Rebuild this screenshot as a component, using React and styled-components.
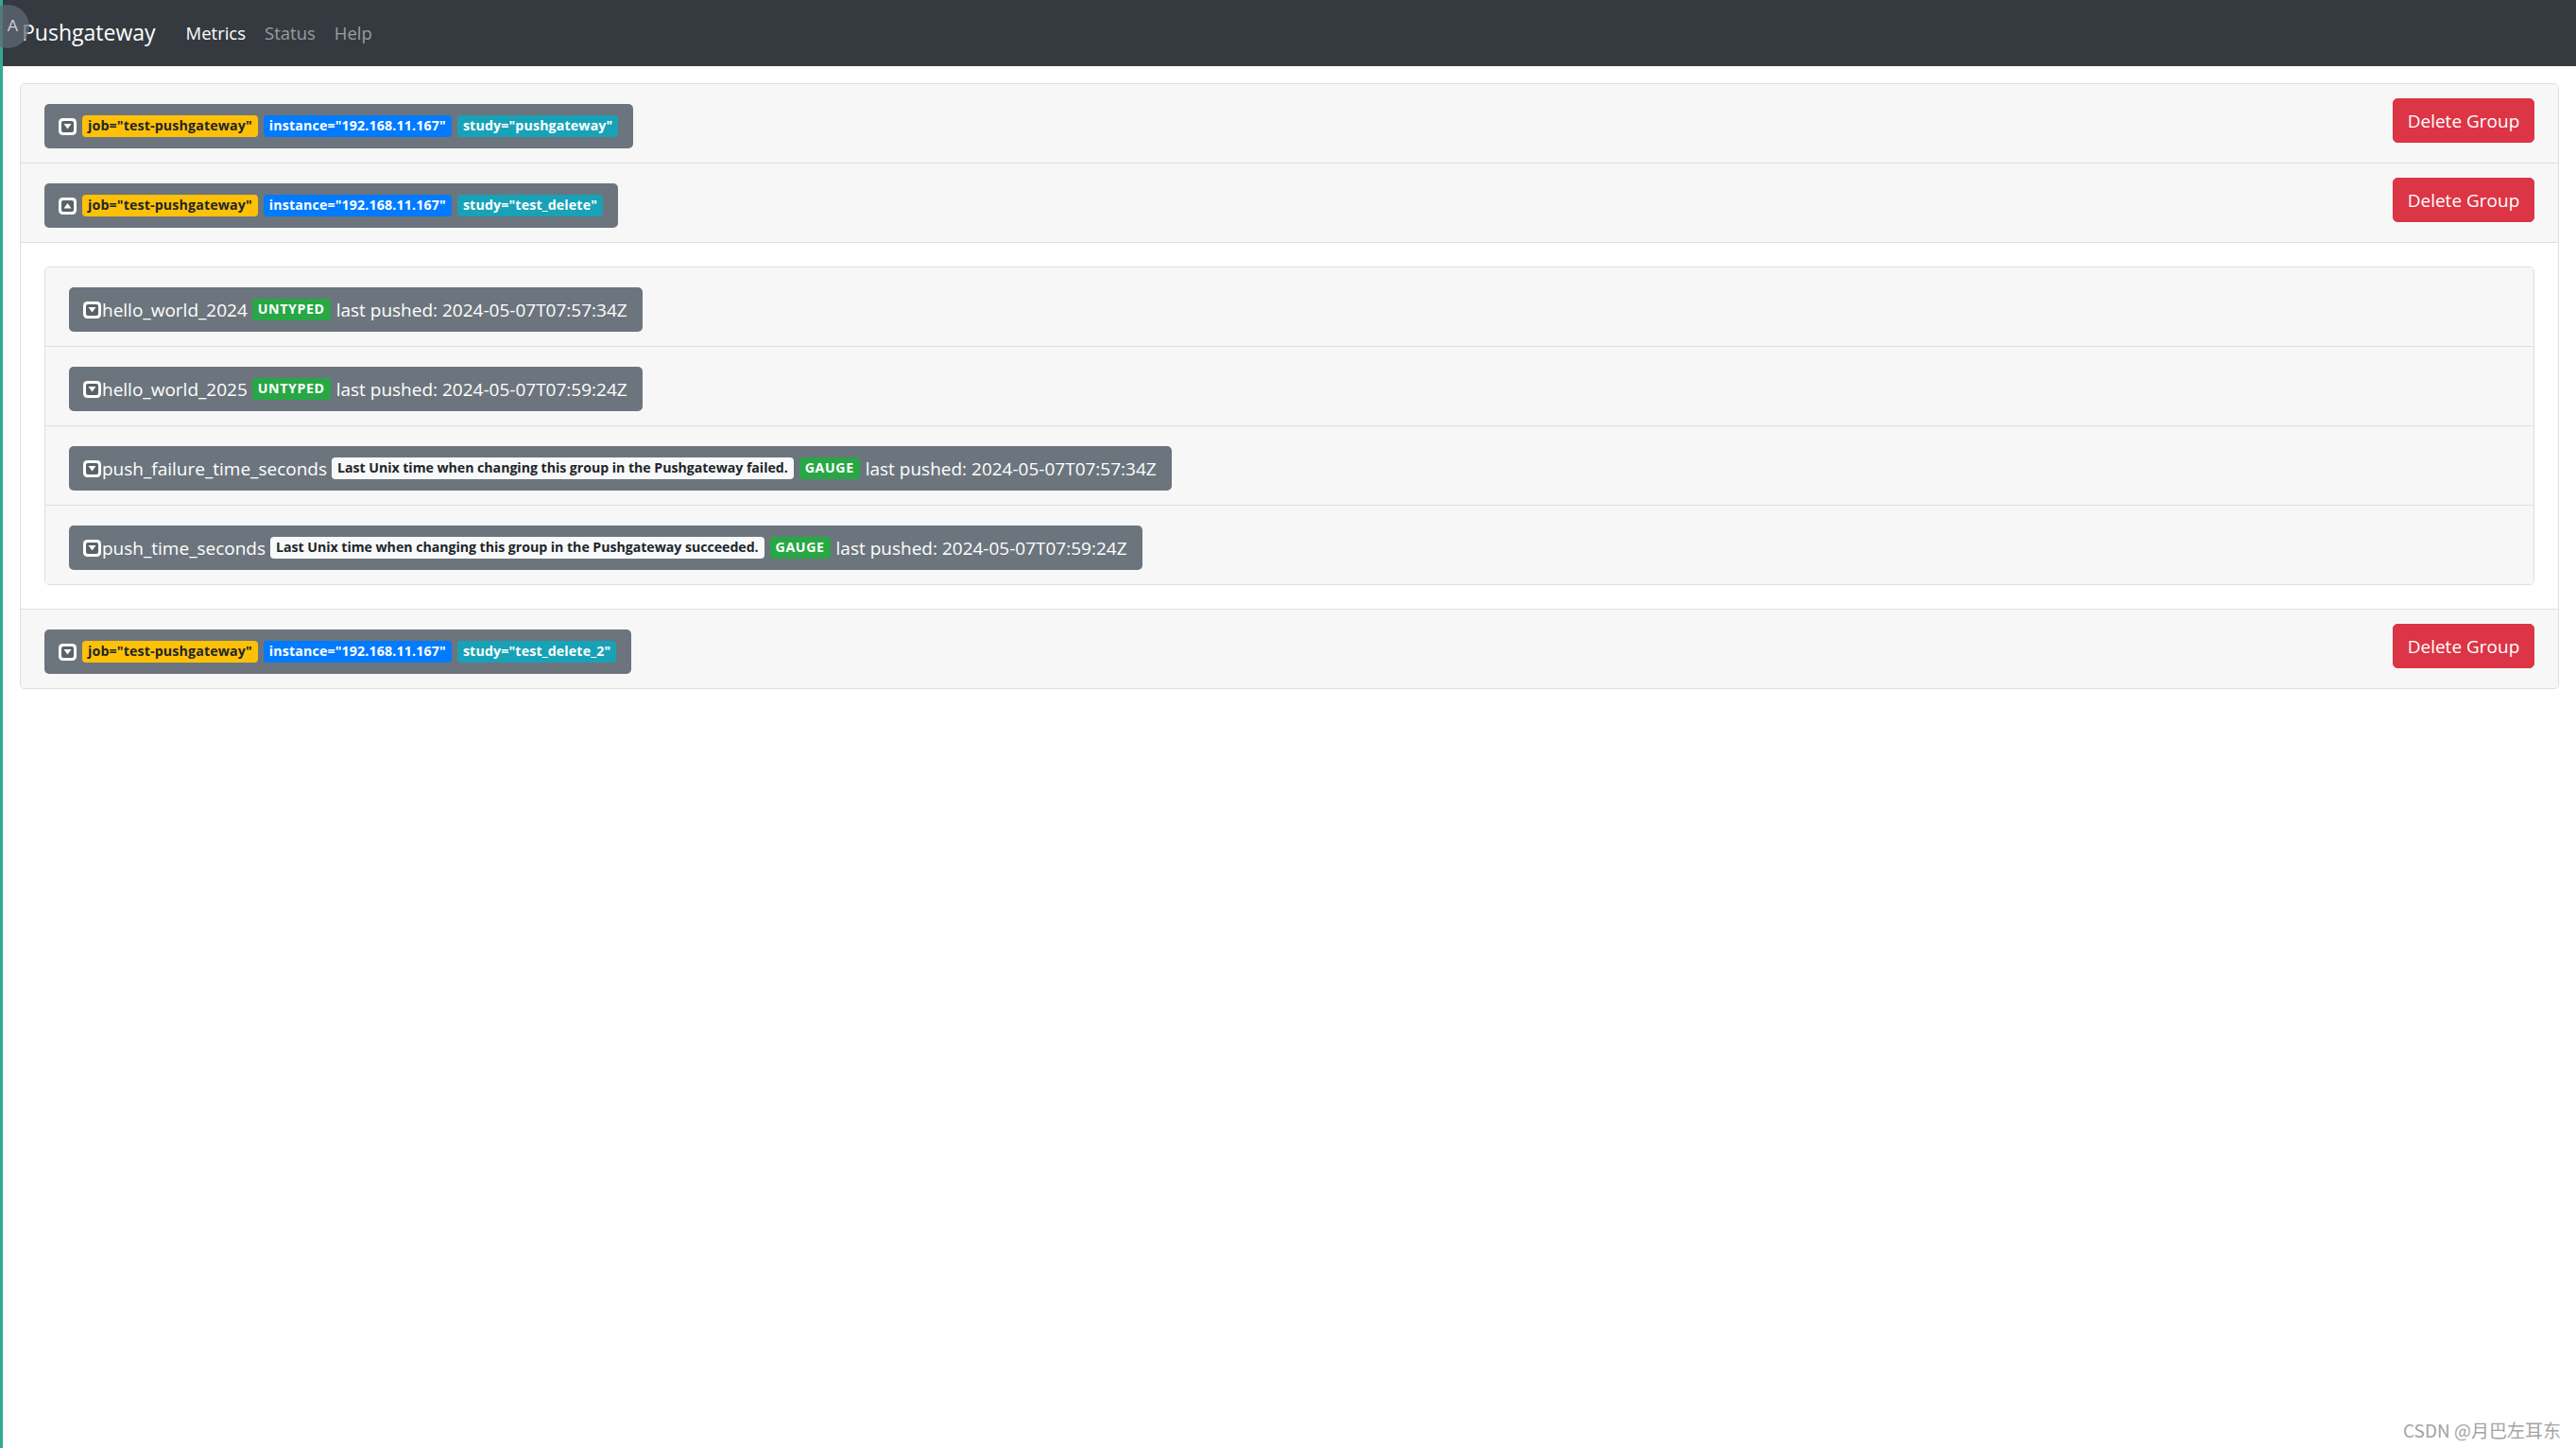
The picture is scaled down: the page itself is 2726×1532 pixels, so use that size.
import React from "react";
import styled, { createGlobalStyle } from "styled-components";

const GlobalStyle = createGlobalStyle`
  html, body { margin: 0; padding: 0; background: #ffffff; }
  body { font-family: "Open Sans", "Noto Sans", sans-serif; color: #212529; }
`;

const Page = styled.div`
  min-height: 1532px;
  border-left: 3px solid #35a894;
  box-sizing: border-box;
  position: relative;
`;

const Navbar = styled.nav`
  height: 70px;
  background: #343a40;
  display: flex;
  align-items: center;
  padding: 0 20px;
  box-sizing: border-box;
`;

const Brand = styled.a`
  font-size: 23px;
  color: #ffffff;
  margin-right: 22px;
  line-height: 1;
  padding-bottom: 2px;
`;

const NavLink = styled.a`
  font-size: 18.5px;
  padding: 0 10px;
  line-height: 1;
  color: ${(p) => (p.$active ? "#ffffff" : "rgba(255,255,255,0.5)")};
`;

const Container = styled.main`
  padding: 18px 18px 0 18px;
`;

const Card = styled.div`
  border: 1px solid #dfdfdf;
  border-radius: 5px;
  overflow: hidden;
  background: #ffffff;
`;

const Header = styled.div`
  display: flex;
  justify-content: space-between;
  align-items: flex-start;
  padding: 15px 25px;
  background: #f7f7f7;
  border-bottom: 1px solid #dfdfdf;
  &:last-child { border-bottom: 0; }
`;

const Body = styled.div`
  padding: 25px;
  border-bottom: 1px solid #dfdfdf;
  &:last-child { border-bottom: 0; }
`;

const InnerCard = styled.div`
  border: 1px solid #dfdfdf;
  border-radius: 5px;
  overflow: hidden;
`;

const MetricRow = styled.div`
  display: flex;
  padding: 21px 25px 15px 25px;
  background: #f7f7f7;
  border-bottom: 1px solid #dfdfdf;
  &:last-child { border-bottom: 0; }
`;

const Pill = styled.div`
  display: inline-flex;
  align-items: center;
  height: 47px;
  box-sizing: border-box;
  padding: 0 16px 0 15px;
  background: #6c757d;
  border-radius: 5px;
  color: #ffffff;
  font-size: 19px;
  white-space: nowrap;
  margin-top: ${(p) => p.$offset || 0}px;
  gap: ${(p) => p.$gap || 0}px;
`;

const Gap = styled.span`
  display: inline-block;
  width: ${(p) => p.$w}px;
`;

const Badge = styled.span`
  display: inline-flex;
  align-items: center;
  height: 23px;
  box-sizing: border-box;
  padding: 0 6px;
  border-radius: 4px;
  font-size: 14.2px;
  font-weight: 700;
  line-height: 1;
  letter-spacing: ${(p) => p.$ls || 0}px;
  background: ${(p) => p.$bg};
  color: ${(p) => p.$fg};
`;

const DangerButton = styled.button`
  width: 150px;
  height: 47px;
  border: 1px solid #dc3545;
  border-radius: 5px;
  background: #dc3545;
  color: #ffffff;
  font-family: "Open Sans", "Noto Sans", sans-serif;
  font-size: 19px;
  padding: 0;
  cursor: pointer;
`;

const Watermark = styled.div`
  position: absolute;
  right: 16px;
  bottom: 6px;
  font-family: "Noto Sans CJK SC", sans-serif;
  font-size: 19px;
  color: #a3a3a3;
`;

const Translate = styled.div`
  position: absolute;
  left: -18px;
  top: 5px;
  width: 46px;
  height: 46px;
  border-radius: 50%;
  background: rgba(95, 104, 116, 0.75);
  color: #c9ced4;
  font-family: "Liberation Sans", sans-serif;
  font-size: 17px;
  display: flex;
  align-items: center;
  justify-content: flex-end;
  padding-right: 12px;
  box-sizing: border-box;
`;

const VARIANTS = {
  warning: { bg: "#ffc107", fg: "#212529", ls: 0.15 },
  primary: { bg: "#007bff", fg: "#ffffff", ls: 0.15 },
  info: { bg: "#17a2b8", fg: "#ffffff", ls: 0.15 },
  success: { bg: "#28a745", fg: "#ffffff", ls: 0.6 },
  light: { bg: "#f8f9fa", fg: "#212529", ls: -0.05 },
};

function Toggle({ up }) {
  return (
    <svg width="19" height="18" viewBox="0 0 19 18" style={{ flex: "none" }}>
      <rect x="0" y="0" width="19" height="18" rx="4.5" fill="#ffffff" />
      <rect x="3" y="3" width="13" height="12" rx="2" fill="#5a6268" />
      {up ? (
        <path d="M5.5 11.5 L13.5 11.5 L9.5 6 Z" fill="#ffffff" />
      ) : (
        <path d="M5.5 6 L13.5 6 L9.5 11.5 Z" fill="#ffffff" />
      )}
    </svg>
  );
}

function Label({ variant, children }) {
  const v = VARIANTS[variant];
  return (
    <Badge $bg={v.bg} $fg={v.fg} $ls={v.ls}>
      {children}
    </Badge>
  );
}

const groups = [
  { study: "pushgateway", open: false },
  { study: "test_delete", open: true },
  { study: "test_delete_2", open: false },
];

const metrics = [
  { name: "hello_world_2024", type: "UNTYPED", pushed: "2024-05-07T07:57:34Z" },
  { name: "hello_world_2025", type: "UNTYPED", pushed: "2024-05-07T07:59:24Z" },
  {
    name: "push_failure_time_seconds",
    help: "Last Unix time when changing this group in the Pushgateway failed.",
    type: "GAUGE",
    pushed: "2024-05-07T07:57:34Z",
  },
  {
    name: "push_time_seconds",
    help: "Last Unix time when changing this group in the Pushgateway succeeded.",
    type: "GAUGE",
    pushed: "2024-05-07T07:59:24Z",
  },
];

function GroupHeader({ study, open }) {
  return (
    <Header>
      <Pill $offset={6} $gap={6}>
        <Toggle up={open} />
        <Label variant="warning">job="test-pushgateway"</Label>
        <Label variant="primary">instance="192.168.11.167"</Label>
        <Label variant="info">study="{study}"</Label>
      </Pill>
      <DangerButton>Delete Group</DangerButton>
    </Header>
  );
}

function Metric({ m }) {
  return (
    <MetricRow>
      <Pill>
        <Toggle />
        <Gap $w={1} />
        {m.name}
        <Gap $w={5} />
        {m.help && (
          <>
            <Label variant="light">{m.help}</Label>
            <Gap $w={6} />
          </>
        )}
        <Label variant="success">{m.type}</Label>
        <Gap $w={6} />
        last pushed: {m.pushed}
      </Pill>
    </MetricRow>
  );
}

export default function App() {
  return (
    <>
      <GlobalStyle />
      <Page>
        <Navbar>
          <Brand>Pushgateway</Brand>
          <NavLink $active>Metrics</NavLink>
          <NavLink>Status</NavLink>
          <NavLink>Help</NavLink>
        </Navbar>
        <Translate>A</Translate>
        <Container>
          <Card>
            {groups.map((g) => (
              <React.Fragment key={g.study}>
                <GroupHeader study={g.study} open={g.open} />
                {g.open && (
                  <Body>
                    <InnerCard>
                      {metrics.map((m) => (
                        <Metric key={m.name} m={m} />
                      ))}
                    </InnerCard>
                  </Body>
                )}
              </React.Fragment>
            ))}
          </Card>
        </Container>
        <Watermark>CSDN @月巴左耳东</Watermark>
      </Page>
    </>
  );
}
